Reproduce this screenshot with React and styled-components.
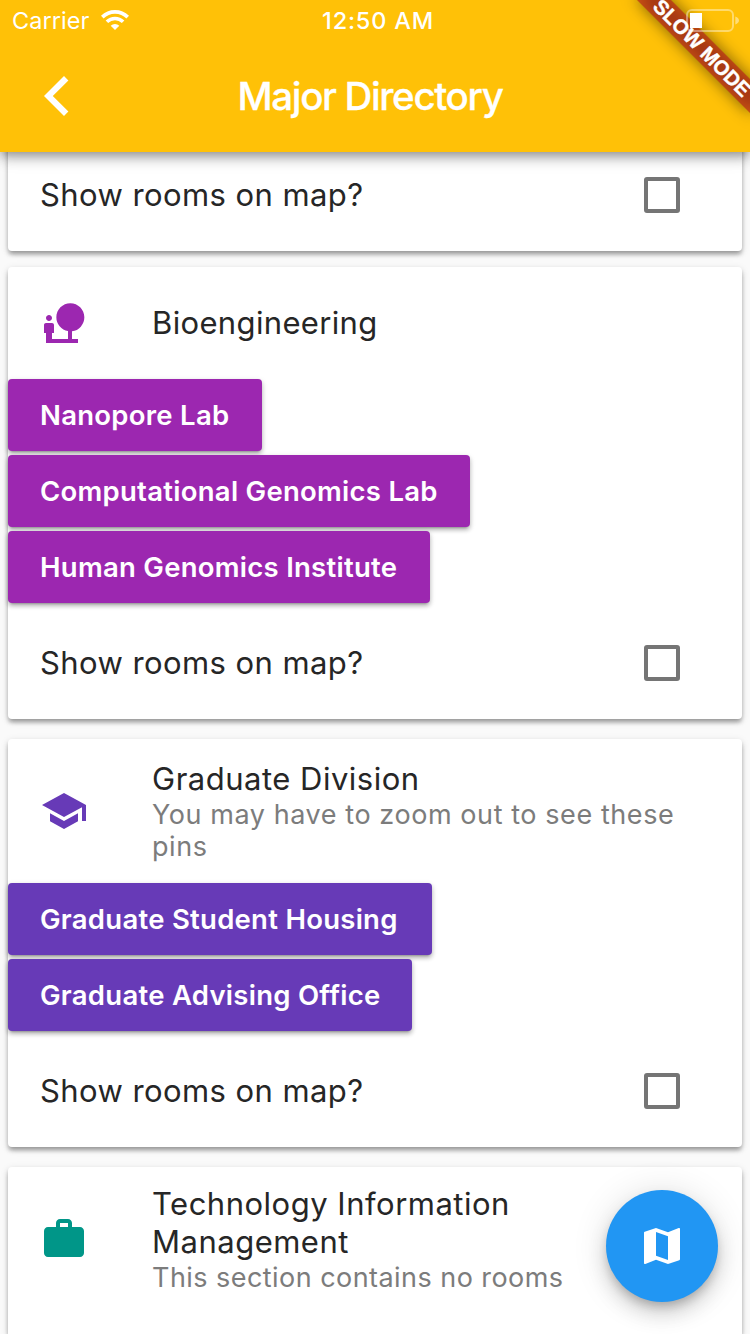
import React from 'react';
import styled, { createGlobalStyle } from 'styled-components';

const GlobalStyle = createGlobalStyle`
  *, *::before, *::after { box-sizing: border-box; }
  html, body { margin: 0; padding: 0; }
  body { background: #fafafa; font-family: Inter, "Liberation Sans", sans-serif; }
`;

const Screen = styled.div`
  position: relative;
  display: flex;
  flex-direction: column;
  width: 750px;
  height: 1334px;
  overflow: hidden;
  background: #fafafa;
`;

const AppBar = styled.header`
  position: relative;
  z-index: 2;
  flex: none;
  height: 152px;
  background: #ffc107;
  color: #fff;
  box-shadow: 0 4px 8px -2px rgba(0, 0, 0, 0.24), 0 8px 10px rgba(0, 0, 0, 0.16),
    0 2px 20px rgba(0, 0, 0, 0.14);
`;

const StatusBar = styled.div`
  display: grid;
  grid-template-columns: 1fr auto 1fr;
  align-items: center;
  height: 40px;
  padding: 0 11px 0 12px;
  font-size: 23.5px;
`;

const Carrier = styled.div`
  display: flex;
  align-items: center;
  gap: 12px;
  letter-spacing: 0.05px;
`;

const Clock = styled.div`
  font-weight: 500;
  letter-spacing: 0.8px;
  padding-left: 5px;
`;

const BatterySlot = styled.div`
  display: flex;
  justify-content: flex-end;
  position: relative;
  z-index: 3;
`;

const Toolbar = styled.div`
  display: grid;
  grid-template-columns: 112px 1fr 112px;
  align-items: center;
  height: 112px;
`;

const BackButton = styled.button`
  display: flex;
  align-items: center;
  height: 96px;
  padding: 0 0 0 44px;
  border: 0;
  background: none;
  color: inherit;
`;

const Title = styled.h1`
  margin: 0;
  padding-right: 10px;
  text-align: center;
  font-size: 38.5px;
  font-weight: 500;
  letter-spacing: -1.35px;
  -webkit-text-stroke: 0.3px #fff;
`;

const Ribbon = styled.div`
  position: absolute;
  z-index: 2;
  top: 36px;
  left: 622px;
  width: 160px;
  height: 24px;
  transform: rotate(45deg);
  font-family: 'Liberation Sans', sans-serif;
  font-size: 20.4px;
  line-height: 24px;
  font-weight: 700;
  text-align: center;
  white-space: nowrap;
  -webkit-text-stroke: 0.4px #fff;

  &::before {
    content: '';
    position: absolute;
    inset: 0;
    background: rgba(0, 0, 0, 0.5);
    filter: blur(8px);
  }
`;

const RibbonLabel = styled.span`
  position: absolute;
  inset: 0;
  background: rgba(183, 28, 28, 0.63);
`;

const List = styled.main`
  display: flex;
  flex: 1;
  flex-direction: column;
  gap: 20px;
  margin-top: -13px;
  padding: 0 8px;
`;

const Card = styled.section`
  flex: none;
  background: #fff;
  border-radius: 4px;
  margin-top: ${(p) => p.$lift || 0}px;
  box-shadow: 0 4px 4px -1px rgba(0, 0, 0, 0.22), 0 3px 5px rgba(0, 0, 0, 0.17),
    0 2px 8px rgba(0, 0, 0, 0.1);

  &:last-child {
    flex: 1;
    border-radius: 4px 4px 0 0;
  }
`;

const Tile = styled.div`
  display: flex;
  align-items: center;
  height: ${(p) => p.$height || 112}px;
  padding: 0 32px;
`;

const Leading = styled.div`
  display: flex;
  flex: none;
  width: 112px;
  color: ${(p) => p.$color};
`;

const TileText = styled.div`
  width: 540px;
`;

const Heading = styled.div`
  font-size: 31px;
  font-weight: 400;
  line-height: 38px;
  letter-spacing: ${(p) => p.$track ?? 0.5}px;
  color: #262626;
  white-space: pre-line;
`;

const Subtitle = styled.div`
  padding-top: 1px;
  margin-bottom: -1px;
  font-size: 27px;
  font-weight: 400;
  line-height: 32px;
  letter-spacing: ${(p) => p.$track ?? 0.57}px;
  color: #7c7c7c;
  white-space: pre-line;
`;

const Rooms = styled.div`
  display: flex;
  flex-direction: column;
  align-items: flex-start;
  gap: 4px;
  padding-bottom: 4px;
`;

const RoomButton = styled.button`
  width: ${(p) => p.$width}px;
  height: 72px;
  padding: 0 0 0 32px;
  border: 0;
  border-radius: 4px;
  background: ${(p) => p.$color};
  color: #fff;
  font: 600 27.5px/32px Inter, 'Liberation Sans', sans-serif;
  letter-spacing: 0.27px;
  text-align: left;
  white-space: nowrap;
  box-shadow: 0 4px 2px -3px rgba(0, 0, 0, 0.2), 0 3px 4px rgba(0, 0, 0, 0.2),
    0 2px 6px rgba(0, 0, 0, 0.14);
`;

const MapToggle = styled(Tile).attrs({ as: 'label' })`
  justify-content: space-between;
  padding-right: 62px;
`;

const Checkbox = styled.span`
  width: 36px;
  height: 36px;
  border: 4px solid #757575;
  border-radius: 3px;
`;

const Fab = styled.button`
  position: absolute;
  z-index: 3;
  right: 32px;
  bottom: 32px;
  display: flex;
  align-items: center;
  justify-content: center;
  width: 112px;
  height: 112px;
  padding: 0;
  border: 0;
  border-radius: 50%;
  background: #2196f3;
  color: #fff;
  box-shadow: 0 6px 10px -2px rgba(0, 0, 0, 0.2), 0 12px 20px rgba(0, 0, 0, 0.14),
    0 2px 36px rgba(0, 0, 0, 0.12);
`;

const ICONS = {
  nature:
    'M22.17 9.17c0-3.87-3.13-7-7-7s-7 3.13-7 7A6.98 6.98 0 0 0 14 16.06V20H6v-3h1v-4c0-.55-.45-1-1-1H3c-.55 0-1 .45-1 1v4h1v5h16v-2h-3v-3.88a7 7 0 0 0 6.17-6.95zM4.5 11c.83 0 1.5-.67 1.5-1.5S5.33 8 4.5 8 3 8.67 3 9.5 3.67 11 4.5 11z',
  school:
    'M5 13.18v4L12 21l7-3.82v-4L12 17l-7-3.82zM12 3L1 9l11 6 9-4.91V17h2V9L12 3z',
  work:
    'M20 6h-4V4c0-1.11-.89-2-2-2h-4c-1.11 0-2 .89-2 2v2H4c-1.11 0-1.99.89-1.99 2L2 19c0 1.11.89 2 2 2h16c1.11 0 2-.89 2-2V8c0-1.11-.89-2-2-2zm-6 0h-4V4h4v2z',
  map:
    'M20.5 3l-.16.03L15 5.1 9 3 3.36 4.9c-.21.07-.36.25-.36.48V20.5c0 .28.22.5.5.5l.16-.03L9 18.9l6 2.1 5.64-1.9c.21-.07.36-.25.36-.48V3.5c0-.28-.22-.5-.5-.5zM15 19l-6-2.11V5l6 2.11V19z',
};

function Icon({ name }) {
  return (
    <svg width="48" height="48" viewBox="0 0 24 24" fill="currentColor">
      <path d={ICONS[name]} />
    </svg>
  );
}

function WifiIcon() {
  return (
    <svg width="28" height="20" viewBox="0 0 28 20" fill="none" stroke="#fff">
      <path d="M1.3 7.1A18 18 0 0 1 26.7 7.1" strokeWidth="3.7" />
      <path d="M5.9 11.8A11.6 11.6 0 0 1 22.1 11.8" strokeWidth="3.6" />
      <path d="M14 20L9.7 15.7A6.2 6.2 0 0 1 18.3 15.7Z" fill="#fff" stroke="none" />
    </svg>
  );
}

function BatteryIcon() {
  return (
    <svg width="53" height="23" viewBox="0 0 53 23">
      <rect x="1" y="1" width="46" height="21" rx="5" fill="none" stroke="#fff" strokeOpacity="0.4" strokeWidth="2" />
      <rect x="4" y="4" width="12" height="15" fill="#fff" />
      <path d="M49.3 7.6C51.6 8.4 53 9.8 53 11.5S51.6 14.6 49.3 15.4Z" fill="#fff" fillOpacity="0.45" />
    </svg>
  );
}

function RoomsOnMap() {
  return (
    <MapToggle>
      <Heading $track={0.42}>Show rooms on map?</Heading>
      <Checkbox />
    </MapToggle>
  );
}

const sections = [
  {
    title: 'Bioengineering',
    track: 0.35,
    icon: 'nature',
    color: '#9c27b0',
    height: 112,
    lift: -4,
    rooms: [
      { name: 'Nanopore Lab', width: 254 },
      { name: 'Computational Genomics Lab', width: 462 },
      { name: 'Human Genomics Institute', width: 422 },
    ],
  },
  {
    title: 'Graduate Division',
    note: 'You may have to zoom out to see these\npins',
    icon: 'school',
    color: '#673ab7',
    height: 144,
    rooms: [
      { name: 'Graduate Student Housing', width: 424 },
      { name: 'Graduate Advising Office', width: 404 },
    ],
  },
  {
    title: 'Technology Information\nManagement',
    note: 'This section contains no rooms',
    noteTrack: 0.45,
    icon: 'work',
    color: '#009688',
    height: 144,
    rooms: [],
  },
];

function Section({ title, track, note, noteTrack, icon, color, height, lift, rooms }) {
  return (
    <Card $lift={lift}>
      <Tile $height={height}>
        <Leading $color={color}>
          <Icon name={icon} />
        </Leading>
        <TileText>
          <Heading $track={track}>{title}</Heading>
          {note && <Subtitle $track={noteTrack}>{note}</Subtitle>}
        </TileText>
      </Tile>
      {rooms.length > 0 && (
        <>
          <Rooms>
            {rooms.map((room) => (
              <RoomButton key={room.name} $color={color} $width={room.width}>
                {room.name}
              </RoomButton>
            ))}
          </Rooms>
          <RoomsOnMap />
        </>
      )}
    </Card>
  );
}

export default function App() {
  return (
    <Screen>
      <GlobalStyle />
      <AppBar>
        <StatusBar>
          <Carrier>
            Carrier
            <WifiIcon />
          </Carrier>
          <Clock>12:50 AM</Clock>
          <BatterySlot>
            <BatteryIcon />
          </BatterySlot>
        </StatusBar>
        <Toolbar>
          <BackButton aria-label="Back">
            <svg width="25" height="40" viewBox="0 0 25 40" fill="currentColor">
              <path d="M0 20L20 0l4.4 4.4L8.8 20l15.6 15.6L20 40z" />
            </svg>
          </BackButton>
          <Title>Major Directory</Title>
        </Toolbar>
        <Ribbon>
          <RibbonLabel>SLOW MODE</RibbonLabel>
        </Ribbon>
      </AppBar>
      <List>
        <Card>
          <RoomsOnMap />
        </Card>
        {sections.map((section) => (
          <Section key={section.title} {...section} />
        ))}
      </List>
      <Fab aria-label="Show map">
        <Icon name="map" />
      </Fab>
    </Screen>
  );
}
